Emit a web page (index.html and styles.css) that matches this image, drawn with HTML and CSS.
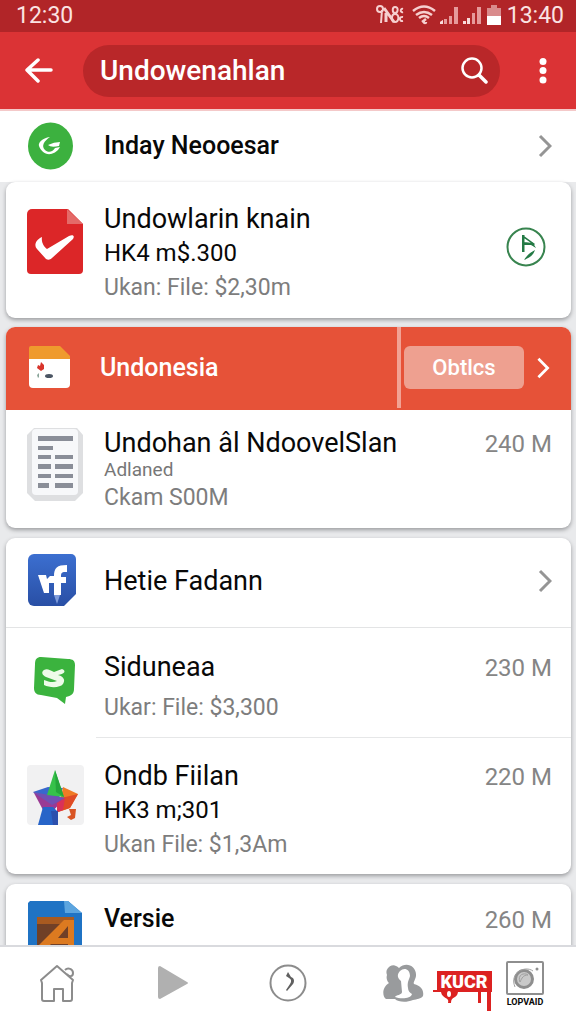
FILE: index.html
```html
<!DOCTYPE html>
<html lang="id">
<head>
<meta charset="utf-8">
<meta name="viewport" content="width=device-width, initial-scale=1">
<title>Undowenahlan</title>
<link rel="stylesheet" href="styles.css">
</head>
<body>
<div class="app">
  <div class="status">
    <span>12:30</span>
    <div class="status-right">
      <svg class="status-icons" viewBox="0 0 130 22" aria-hidden="true">
        <g fill="none" stroke="#f6cfcf" stroke-width="2">
          <path d="M5 2c4 0 4 6 0 6s-4-6 0-6M7 6l-1 13M20 3c4 0 3 6 0 6s-3-6 0-6M20 10c5 0 4 8 0 8s-4-8 0-8M28 5c-3-1-3 4 0 3M28 13c-4-1-4 5 0 4"/>
          <path d="M9 4l10 14M11 18V9" stroke-width="3"/>
          <path d="M38 7q11-9 22 0M41 11q8-6 16 0M44 14q5-4 10 0M47 18l4-3M50 17a1 1 0 1 0 1 1" stroke-width="2.500"/>
        </g>
        <g fill="#e69a9b"><path d="M65 20v-2l3-2v4zM69 20v-5h3v5zM74 20v-8h3v8zM79 20V3h4v17zM88 20v-3h3v3zM92 20v-6h3v6zM97 20V9h3v11zM102 20V3h4v17z"/><path d="M116 1h6v3h4v9h-14V4h4z" fill="#d98b8c"/></g>
        <path d="M112 12h14v9h-14z" fill="#fff"/><path d="M88 20v-3h3v3zM92 20v-6h3v6zM65 20v-2l3-2v4z" fill="#f9dcdc"/>
      </svg>
      <span>13:40</span>
    </div>
  </div>
  <header class="topbar">
    <button class="icon-btn" aria-label="Back">
      <svg width="28" height="28" viewBox="0 0 28 28" fill="none" stroke="#fff" stroke-width="3.500" stroke-linecap="round" stroke-linejoin="round"><path d="M13 3 2 13l11 11M3 13h23"/></svg>
    </button>
    <form class="search">
      <input class="search-input" type="text" aria-label="Search" value="Undowenahlan">
      <button class="icon-btn" type="button" aria-label="Search">
        <svg width="28" height="28" viewBox="0 0 28 28" fill="none" stroke="#fff" stroke-width="2.500" stroke-linecap="round"><circle cx="12" cy="11" r="9.500"/><path d="m19 18 7 7" stroke-width="3.500"/></svg>
      </button>
    </form>
    <button class="icon-btn menu" aria-label="More">
      <svg width="10" height="28" viewBox="0 0 10 28" fill="#fff"><circle cx="5" cy="4.500" r="3.500"/><circle cx="5" cy="13.500" r="3.500"/><circle cx="5" cy="23" r="3.500"/></svg>
    </button>
  </header>

  <main class="list">
    <a class="row row-first" href="#">
      <svg class="icon" viewBox="0 0 57 48" aria-hidden="true"><ellipse cx="23.500" cy="24" rx="22.500" ry="23.500" fill="#3cb13f"/><path d="M23 15c-8 1-12 6-11 9 2 5 6 9 12 8 3-1 5-2 7-4l2-3-5 1c-2 4-7 5-10 2-4-4-1-9 5-13z" fill="#fff"/><path d="M21 23q6-3 12-3l-1 4q-8 2-11-1z" fill="#fff"/></svg>
      <h2 class="title title-sm">Inday Neooesar</h2>
      <svg class="chevron" viewBox="0 0 14 24"><path d="m2 2 10 10L2 22"/></svg>
    </a>

    <section class="card card-joined">
      <article class="row row-file">
        <svg class="icon" viewBox="0 0 57 82" aria-hidden="true"><path d="M5 8h36l15 15v46a4 4 0 0 1-4 4H4a4 4 0 0 1-4-4V13a5 5 0 0 1 5-5z" fill="#dc2628"/><path d="M40 8v15h16z" fill="#e46a68"/><path d="M15 36c-7 3-8 9-5 12l9 10c2 1 4 1 6-1l21-19c2-3 0-5-4-3L20 48c-3-2-6-7-5-12z" fill="#fff"/></svg>
        <div class="text">
          <h2 class="title">Undowlarin knain</h2>
          <p class="sub">HK4 m$.300</p>
          <p class="meta">Ukan: File: $2,30m</p>
        </div>
        <svg class="badge" viewBox="0 0 46 40" aria-hidden="true"><circle cx="20" cy="20" r="18.500" fill="none" stroke="#38844f" stroke-width="2"/><path d="M16 8h2.500v17H16zM18 9l11 8-1 1-10-7zM18 15l9 1 3 5-5-3h-7zM29 23c-4 2-8 5-11 10 5-2 9-4 11-10z" fill="#247a45"/></svg>
      </article>
    </section>

    <section class="card">
      <div class="banner">
        <svg class="icon" viewBox="0 0 57 43" aria-hidden="true"><path d="M2 12h41v26a4 4 0 0 1-4 4H6a4 4 0 0 1-4-4z" fill="#fff"/><path d="M4 0h29l10 10v3H2V2a2 2 0 0 1 2-2z" fill="#ef9a2d"/><path d="m14 16 3 3v4l-3 2-4-3 1-3 2 1z" fill="#d8342b"/><path d="m10 29 2-2v4l-1 1z" fill="#8aa59a"/><ellipse cx="22" cy="30" rx="4" ry="2" fill="#4b5563"/></svg>
        <h2 class="title title-sm">Undonesia</h2>
        <div class="banner-actions">
          <button class="pill">Obtlcs</button>
          <svg class="chevron chevron-light" viewBox="0 0 14 24"><path d="m2 2 10 10L2 22"/></svg>
        </div>
      </div>
      <article class="row row-doc">
        <svg class="icon" viewBox="0 0 57 82" aria-hidden="true"><path d="M7 3h43l6 7v58l-8 8H8l-8-8V10z" fill="#dedfe1"/><rect x="5" y="4" width="46" height="66" rx="4" fill="#f7f8fa"/><path d="M11 11h35v5H11zM11 21h15v4H11zM11 30h13v4H11zM28 30h18v4H28zM11 39h13v5H11zM28 39h18v5H28zM11 49h13v4H11zM28 49h18v4H28zM11 58h11v5H11zM28 58h18v5H28z" fill="#8a8e98"/></svg>
        <div class="text">
          <h2 class="title">Undohan âl NdoovelSlan</h2>
          <p class="note">Adlaned</p>
          <p class="meta">Ckam S00M</p>
        </div>
        <span class="size">240 M</span>
      </article>
    </section>

    <section class="card">
      <a class="row row-link" href="#">
        <svg class="icon" viewBox="0 0 57 53" aria-hidden="true"><defs><linearGradient id="blue" x2="0" y2="1"><stop stop-color="#3c6fd0"/><stop offset="1" stop-color="#294fa5"/></linearGradient></defs><path d="M7 0h37a5 5 0 0 1 5 5v35L37 52H7a6 6 0 0 1-6-6V6a6 6 0 0 1 6-6z" fill="url(#blue)"/><path d="M11 21h8l1 4 3-3h4c0-8 3-11 13-11v7c-5 0-6 0-6 5h5v6h-5v12h-7V29h-5v10h-5z" fill="#fff"/><path d="M27 41h6l-3 9z" fill="#7f9cdb"/></svg>
        <h2 class="title">Hetie Fadann</h2>
        <svg class="chevron" viewBox="0 0 14 24"><path d="m2 2 10 10L2 22"/></svg>
      </a>
      <article class="row row-chat">
        <svg class="icon" viewBox="0 0 57 60" aria-hidden="true"><path d="m14 8 27 2c5 0 7 2 7 6l-1 24c0 5-3 7-8 8l-1 7-8-6-16-3c-5 0-7-3-7-7l1-24c0-5 2-7 6-7z" fill="#3bb33e"/><path d="M17 21c3-2 6 0 10 2l8-3c5 2 2 5-4 6 7 2 7 6 5 9-3 4-13 4-19 1v-5c5 2 9 3 13 1l-11-4c-4-2-5-5-2-7z" fill="#eefbe9"/></svg>
        <div class="text text-gap">
          <h2 class="title">Siduneaa</h2>
          <p class="meta">Ukar: File: $3,300</p>
        </div>
        <span class="size">230 M</span>
      </article>
      <article class="row row-star inset">
        <svg class="icon" viewBox="0 0 57 82" aria-hidden="true"><rect y="7" width="57" height="60" rx="4" fill="#f1f1f2"/><path d="m6 34 15-5 15 1-8 20z" fill="#3968cd"/><path d="m36 29 15 7-8 14-12 4z" fill="#ef7b25"/><path d="m30 41 21-5-8 14-12 4z" fill="#df4b26"/><path d="m7 35 31 5-13 14-9-2z" fill="#9a3a94"/><path d="m6 34 32 6-13 7z" fill="#7150b3"/><path d="m30 45 8-5-2 12-6 2z" fill="#da3158"/><path d="M16 49h10l5 5v13H11z" fill="#2764c8"/><path d="M24 53h7v14h-5z" fill="#2c4fad"/><path d="m28 12-8 25 17 2z" fill="#36c14a"/><path d="m28 12 1 22 8 5z" fill="#24a63b"/><path d="M42 51h7l-1 9-4 2-4-3 4-2-1-3z" fill="#d95525"/></svg>
        <div class="text">
          <h2 class="title">Ondb Fiilan</h2>
          <p class="sub">HK3 m;301</p>
          <p class="meta">Ukan File: $1,3Am</p>
        </div>
        <span class="size">220 M</span>
      </article>
    </section>

    <section class="card">
      <article class="row row-last">
        <svg class="icon" viewBox="0 0 57 82" aria-hidden="true"><path d="M3 0h38l14 12v70H1V2z" fill="#1f73c4"/><path d="M37 0h4l14 12H38z" fill="#5ca5df"/><path d="M10 16h37v66H10z" fill="#704027"/><path d="M10 16h37v6l-9 1H10z" fill="#a85a20"/><path d="M10 46 37 19h10v63h-6V43H24L10 58zM41 25l-10 12h10z" fill="#dc7a20" fill-rule="evenodd"/></svg>
        <h2 class="title title-sm">Versie</h2>
        <span class="size">260 M</span>
      </article>
    </section>
  </main>

  <nav class="nav">
    <a href="#" aria-label="Home"><svg width="38" height="38" viewBox="0 0 38 38" fill="none" stroke="#8c8c8c" stroke-width="2" stroke-linejoin="round"><path d="M2 16 18 2l16 14-1 3v16a2 2 0 0 1-2 2h-7V25h-9v12H5a2 2 0 0 1-2-2V19zM26 6c3-3 8-1 8 3s-4 4-6 1"/></svg></a>
    <a href="#" aria-label="Play"><svg width="32" height="36" viewBox="0 0 32 36"><path d="M3 1 30 17q2 1 0 2L3 34q-2 0-2-2V3q0-2 2-2z" fill="#b0b0b0"/></svg></a>
    <a href="#" aria-label="Recent"><svg width="38" height="38" viewBox="0 0 38 38"><circle cx="19" cy="19" r="17.500" fill="none" stroke="#8c8c8c" stroke-width="2"/><path d="m19 8 3 5c3 1 4 4 2 7l-6 7-1-1 4-6c2-3 1-5-1-6l-3-2z" fill="#606060"/></svg></a>
    <a href="#" aria-label="People"><svg width="42" height="40" viewBox="0 0 42 40"><path d="M5 12a7 7 0 0 1 12-7C24-2 35 3 34 13c-1 5-3 6-2 8 8 2 10 7 9 12-2 3-6 3-10 4-7 3-15 2-18-1H4c-4-3-4-12 3-16-2-2-3-5-2-8z" fill="#999b9d"/><path d="M18 8c4-4 10-2 10 5-1 4-3 6-2 12 0 3 2 5 4 6-1 5-12 5-17 3 1-2 7-2 7-5l-1-11c-4-3-4-7-1-10z" fill="#fff"/></svg></a>
    <div class="nav-group">
      <a class="nav-kucr" href="#"><svg width="62" height="44" viewBox="0 0 62 44"><path d="M5 2h55v21h-1v19h-4V23h-6v11h-3V23H26c-1 7-7 4-7 11h-3c2-6-6-4-7-11H1v-2h4z" fill="#dc2221"/><ellipse cx="17" cy="25" rx="2" ry="3" fill="#fff"/><text x="32" y="19" class="logo-text">KUCR</text></svg></a>
      <a class="nav-camera" href="#"><svg width="38" height="35" viewBox="0 0 38 35"><rect x="1" y="1" width="36" height="32" rx="1" fill="#fff" stroke="#8e8e8e" stroke-width="2"/><circle cx="18" cy="18" r="8.500" fill="#c9c9c9" stroke="#8e8e8e" stroke-width="3"/><path d="M9 26C3 12 19 4 27 10M14 21c-3-7 4-10 8-7-5 0-6 3-8 7z" fill="none" stroke="#a0a0a0"/><circle cx="31" cy="8" r="1.500" fill="#8e8e8e"/></svg><span>LOPVAID</span></a>
    </div>
  </nav>
</div>
</body>
</html>
```
FILE: styles.css
```css
* { box-sizing: border-box; }

body {
  margin: 0;
  font-family: Roboto, "Liberation Sans", sans-serif;
  color: #080808;
  background: #e9eaec;
}

h2, p { margin: 0; font-weight: 400; }
a { color: inherit; text-decoration: none; }
svg { display: block; flex: none; }
button { border: 0; font: inherit; color: inherit; cursor: pointer; }

.app { display: flex; flex-direction: column; height: 100vh; }

.status {
  display: flex;
  align-items: center;
  justify-content: space-between;
  height: 32px;
  padding: 0 12px 2px 16px;
  background: #b12528;
  color: #fbe3e3;
  font-size: 23px;
}
.status-right { display: flex; align-items: center; gap: 2px; }
.status-icons { width: 130px; height: 22px; }

.topbar {
  display: flex;
  align-items: center;
  height: 77px;
  padding: 0 28px 0 25px;
  background: #db3335;
}
.icon-btn { padding: 0; background: none; }
.search {
  flex: 1;
  display: flex;
  align-items: center;
  min-width: 0;
  height: 52px;
  margin: 0 38px 0 30px;
  padding: 0 12px 0 17px;
  border-radius: 26px;
  background: #b92729;
}
.search-input {
  flex: 1;
  min-width: 0;
  padding: 0;
  border: 0;
  outline: 0;
  background: none;
  color: #fff;
  font: 500 28px Roboto, "Liberation Sans", sans-serif;
}

.list { flex: 1; min-height: 0; overflow: hidden; }

.row { display: flex; align-items: flex-start; gap: 20px; padding: 0 19px 0 21px; }
.row-first {
  align-items: center;
  height: 73px;
  padding: 0 24px 2px 27px;
  border-top: 2px solid #f4c9c9;
  background: #fff;
}
.row-file { padding-top: 19px; padding-bottom: 11px; }
.row-doc { padding-top: 15px; padding-bottom: 11px; }
.row-link { align-items: center; height: 89px; padding-bottom: 4px; }
.row-chat { padding-top: 21px; padding-bottom: 10px; border-top: 1px solid #e3e4e5; }
.row-star { padding-top: 21px; padding-bottom: 10px; }
.row-last { padding-top: 17px; }
.inset {
  background: linear-gradient(#e6e7e8, #e6e7e8) 90px 0 / 100% 1px no-repeat;
}

.card {
  margin: 0 5px 10px 6px;
  border-radius: 9px;
  overflow: hidden;
  background: #fff;
  box-shadow: 0 2px 4px #9a9b9e;
}
.card-joined { margin-bottom: 9px; }

.icon { width: 57px; }
.text { flex: 1; min-width: 0; white-space: nowrap; }
.text-gap { display: grid; gap: 4px; }
.title { flex: 1; font-size: 27px; line-height: 36px; white-space: nowrap; }
.title-sm { font-size: 25px; font-weight: 500; }
.sub { font-size: 24px; line-height: 32px; }
.note { font-size: 19px; line-height: 18px; color: #777; }
.meta { font-size: 23px; line-height: 38px; color: #7d7d7d; }
.size { font-size: 24px; line-height: 38px; color: #858585; white-space: nowrap; }
.badge { width: 46px; align-self: center; margin-bottom: 14px; }

.chevron {
  width: 14px;
  height: 24px;
  fill: none;
  stroke: #959595;
  stroke-width: 3;
}
.chevron-light { height: 22px; stroke: #fff; }

.banner {
  display: flex;
  align-items: center;
  gap: 16px;
  height: 83px;
  padding: 0 21px 2px;
  background: #e65238;
  color: #fff;
}
.banner-actions {
  display: flex;
  align-items: center;
  align-self: stretch;
  gap: 12px;
  border-left: 4px solid #f2a294;
  padding-left: 3px;
}
.pill {
  width: 120px;
  height: 43px;
  border-radius: 6px;
  background: #eea090;
  font-size: 22px;
  font-weight: 500;
}

.nav {
  display: grid;
  grid-template-columns: repeat(5, minmax(0, 1fr));
  align-items: center;
  justify-items: center;
  height: 79px;
  padding-bottom: 6px;
  border-top: 2px solid #d9dade;
  background: #fff;
}
.nav-group {
  display: flex;
  align-items: flex-start;
  justify-self: end;
  gap: 12px;
  margin-right: 32px;
  padding-top: 8px;
}
.nav-kucr { padding-top: 8px; }
.nav-camera { display: grid; justify-items: center; }
.nav-camera span { font-size: 9px; line-height: 12px; font-weight: 700; }
.logo-text {
  fill: #fff;
  font-size: 18px;
  font-weight: 900;
  text-anchor: middle;
}
```
